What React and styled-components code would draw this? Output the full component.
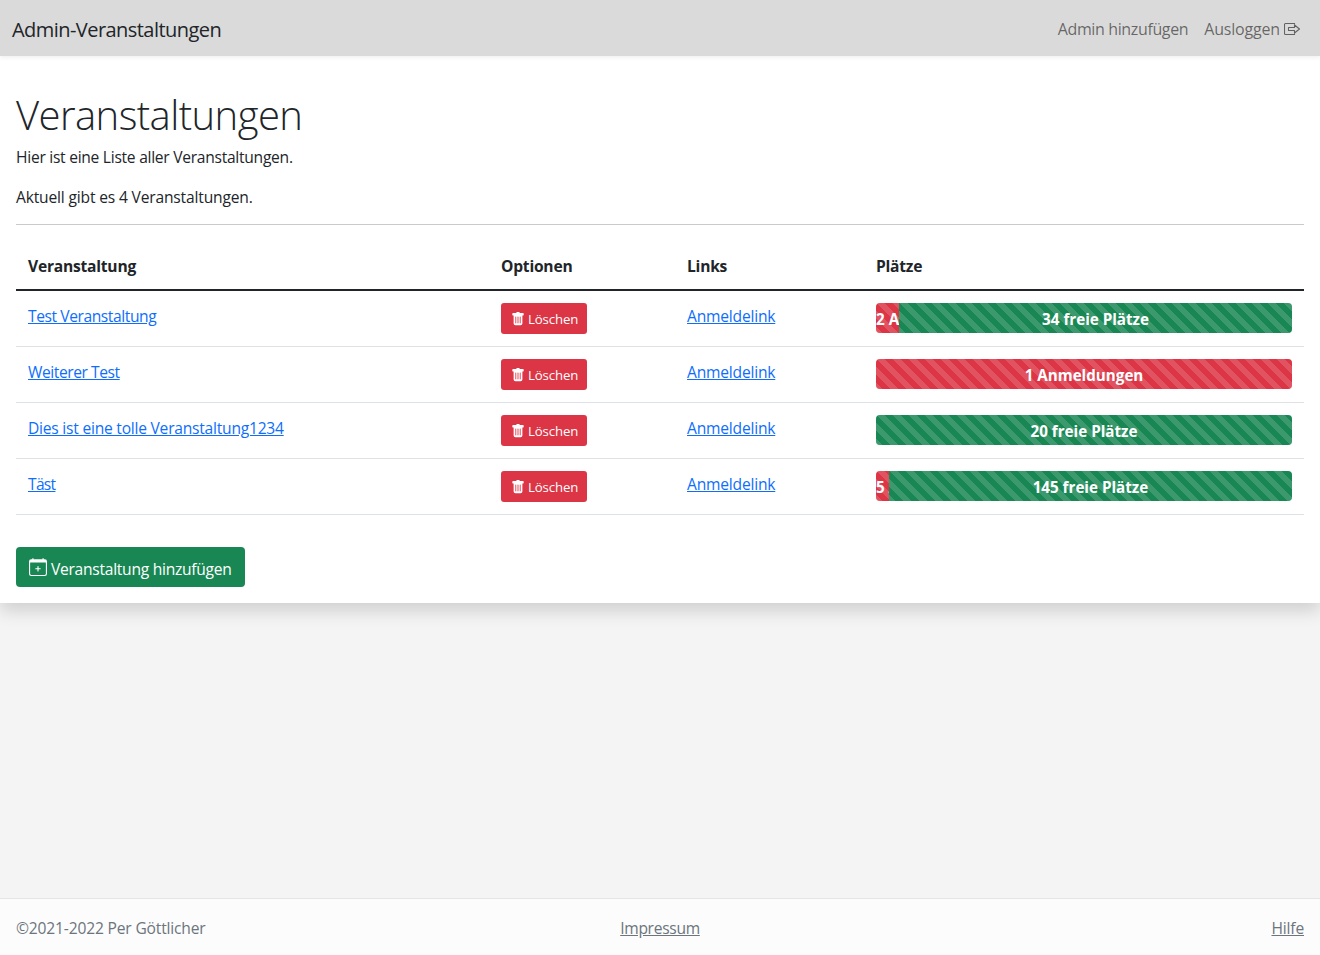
import React from "react";
import styled, { createGlobalStyle } from "styled-components";

const Global = createGlobalStyle`
  html, body { margin: 0; padding: 0; height: 100%; }
  body { background: #f4f4f4; color: #212529; font-family: "Open Sans", "Noto Sans", sans-serif; font-size: 16px; line-height: 24px; }
  #root { min-height: 955px; display: flex; flex-direction: column; }
  * { box-sizing: border-box; }
`;

const Navbar = styled.nav`
  height: 56px; background: #dadada; display: flex; align-items: center; justify-content: space-between;
  padding: 3px 12px 0; flex-shrink: 0; position: relative; z-index: 1;
  box-shadow: 0 2px 4px rgba(0,0,0,.06);
`;
const Brand = styled.a`
  font-size: 20px; line-height: 30px; color: #212529; letter-spacing: -0.55px;
`;
const NavLinks = styled.div`
  display: flex; gap: 16px; padding-right: 8px; margin-top: -2px;
`;
const NavLink = styled.a`
  color: rgba(0,0,0,.55); font-size: 16px; letter-spacing: ${p => p.$track || "-0.18px"}; display: inline-flex; align-items: center; gap: 4px;
`;
const Card = styled.main`
  height: 547px; flex-shrink: 0; background: #fff; padding: 32px 16px 16px;
  box-shadow: 0 8px 16px rgba(0,0,0,.15);
  position: relative;
`;
const Title = styled.h1`
  margin: 0 0 9px; font-size: 40px; line-height: 48px; font-weight: 300; letter-spacing: -0.55px; color: #212529;
  height: 48px; padding-top: 3px;
`;
const Para = styled.p`
  margin: 0 0 16px; font-size: 15.6px; letter-spacing: ${p => p.$track};
`;
const Rule = styled.hr`
  margin: -1px 0 16px; border: 0; border-top: 1px solid #c9caca;
`;
const Table = styled.table`
  width: 100%; border-collapse: collapse; table-layout: fixed; margin-bottom: 32px;
`;
const Head = styled.th`
  text-align: left; padding: 10px 12px 8px; height: 49px; font-weight: 700; font-size: 15.6px; letter-spacing: -0.22px; border-bottom: 2px solid #212529;
  width: ${p => p.$w}px;
`;
const Row = styled.tr`
  height: 56px;
`;
const Cell = styled.td`
  padding: 12px; vertical-align: top; border-bottom: 1px solid #dee2e6; font-size: 15.6px; letter-spacing: -0.2px;
`;
const Link = styled.a`
  color: #0d6efd; text-decoration: underline; display: inline-block; padding-top: 1px; line-height: 24px;
  letter-spacing: ${p => p.$track || "-0.2px"};
`;
const DeleteButton = styled.button`
  display: inline-flex; align-items: center; gap: 3px; height: 31px; width: 86px; padding: 0 0 0 10px; border: 0; border-radius: 3px;
  background: #dc3545; color: #fff; font-family: inherit; font-size: 13.2px; letter-spacing: -0.1px; white-space: nowrap;
`;
const Progress = styled.div`
  display: flex; height: 30px; border-radius: 4px; overflow: hidden; background: #e9ecef;
`;
const Bar = styled.div`
  width: ${p => p.$pct}%;
  background-color: ${p => (p.$red ? "#dc3545" : "#198754")};
  background-image: linear-gradient(45deg, rgba(255,255,255,.15) 25%, transparent 25%, transparent 50%, rgba(255,255,255,.15) 50%, rgba(255,255,255,.15) 75%, transparent 75%, transparent);
  background-size: 16px 16px;
  color: #fff; font-weight: 700; font-size: 15.2px; letter-spacing: 0; text-align: center; white-space: nowrap; overflow: hidden;
  line-height: 33px; height: 30px;
`;
const AddButton = styled.button`
  display: inline-flex; align-items: center; gap: 4px; height: 40px; width: 229px; padding: 0 0 0 13px; border: 0; border-radius: 4px;
  background: #198754; color: #fff; font-family: inherit; font-size: 15.6px; letter-spacing: -0.27px; white-space: nowrap;
`;
const AddLabel = styled.span`
  padding-top: 4px;
`;
const Spacer = styled.div`flex: 1;`;
const Footer = styled.footer`
  height: 57px; background: #fcfcfc; border-top: 1px solid #e4e4e4; display: grid; grid-template-columns: 1fr auto 1fr;
  align-items: center; padding: 2px 16px 0; color: #6c757d; font-size: 15.6px; letter-spacing: -0.17px; flex-shrink: 0;
`;
const FooterLink = styled.a`
  color: #6c757d; text-decoration: underline; justify-self: ${p => p.$end ? "end" : "auto"};
  letter-spacing: ${p => p.$track || "inherit"};
`;

const Trash = () => (
  <svg width="14" height="14" viewBox="0 0 16 16" fill="currentColor">
    <path d="M2.5 1a1 1 0 0 0-1 1v1a1 1 0 0 0 1 1H3v9a2 2 0 0 0 2 2h6a2 2 0 0 0 2-2V4h.5a1 1 0 0 0 1-1V2a1 1 0 0 0-1-1H10a1 1 0 0 0-1-1H7a1 1 0 0 0-1 1H2.5zm3 4a.5.5 0 0 1 .5.5v7a.5.5 0 0 1-1 0v-7a.5.5 0 0 1 .5-.5zM8 5a.5.5 0 0 1 .5.5v7a.5.5 0 0 1-1 0v-7A.5.5 0 0 1 8 5zm3 .5v7a.5.5 0 0 1-1 0v-7a.5.5 0 0 1 1 0z" />
  </svg>
);
const Logout = () => (
  <svg width="16" height="16" viewBox="0 0 16 16" fill="none" stroke="currentColor" strokeWidth="1.1">
    <path d="M10.5 3.5V2.5h-9a1 1 0 0 0-1 1v9a1 1 0 0 0 1 1h9v-1" />
    <path d="M4.5 6.5h6V4l5 4-5 4V9.5h-6z" strokeLinejoin="round" />
  </svg>
);
const CalendarPlus = () => (
  <svg width="18" height="18" viewBox="0 0 16 16" fill="currentColor">
    <path d="M8 7a.5.5 0 0 1 .5.5V9H10a.5.5 0 0 1 0 1H8.5v1.5a.5.5 0 0 1-1 0V10H6a.5.5 0 0 1 0-1h1.5V7.5A.5.5 0 0 1 8 7z" />
    <path d="M3.5 0a.5.5 0 0 1 .5.5V1h8V.5a.5.5 0 0 1 1 0V1h1a2 2 0 0 1 2 2v11a2 2 0 0 1-2 2H2a2 2 0 0 1-2-2V3a2 2 0 0 1 2-2h1V.5a.5.5 0 0 1 .5-.5zM1 4v10a1 1 0 0 0 1 1h12a1 1 0 0 0 1-1V4H1z" />
  </svg>
);

const rows = [
  { name: "Test Veranstaltung", track: "-0.42px", bars: [[5.55, true, "2 Anmeldungen"], [94.45, false, "34 freie Plätze"]] },
  { name: "Weiterer Test", track: "-0.43px", bars: [[100, true, "1 Anmeldungen"]] },
  { name: "Dies ist eine tolle Veranstaltung1234", track: "-0.23px", bars: [[100, false, "20 freie Plätze"]] },
  { name: "Täst", track: "-0.7px", bars: [[3.1, true, "5 Anmeldungen"], [96.9, false, "145 freie Plätze"]] },
];

export default function App() {
  return (
    <>
      <Global />
      <Navbar>
        <Brand>Admin-Veranstaltungen</Brand>
        <NavLinks>
          <NavLink $track="-0.37px">Admin hinzufügen</NavLink>
          <NavLink>Ausloggen <Logout /></NavLink>
        </NavLinks>
      </Navbar>
      <Card>
        <Title>Veranstaltungen</Title>
        <Para $track="-0.27px">Hier ist eine Liste aller Veranstaltungen.</Para>
        <Para $track="-0.17px">Aktuell gibt es 4 Veranstaltungen.</Para>
        <Rule />
        <Table>
          <thead>
            <tr>
              <Head $w={473}>Veranstaltung</Head>
              <Head $w={186}>Optionen</Head>
              <Head $w={189}>Links</Head>
              <Head>Plätze</Head>
            </tr>
          </thead>
          <tbody>
            {rows.map(r => (
              <Row key={r.name}>
                <Cell><Link href="#" $track={r.track}>{r.name}</Link></Cell>
                <Cell><DeleteButton><Trash /> Löschen</DeleteButton></Cell>
                <Cell><Link href="#">Anmeldelink</Link></Cell>
                <Cell>
                  <Progress>
                    {r.bars.map(([pct, red, label]) => (
                      <Bar key={label} $pct={pct} $red={red}>{label}</Bar>
                    ))}
                  </Progress>
                </Cell>
              </Row>
            ))}
          </tbody>
        </Table>
        <AddButton><CalendarPlus /><AddLabel>Veranstaltung hinzufügen</AddLabel></AddButton>
      </Card>
      <Spacer />
      <Footer>
        <span>©2021-2022 Per Göttlicher</span>
        <FooterLink $track="-0.3px">Impressum</FooterLink>
        <FooterLink $end>Hilfe</FooterLink>
      </Footer>
    </>
  );
}
